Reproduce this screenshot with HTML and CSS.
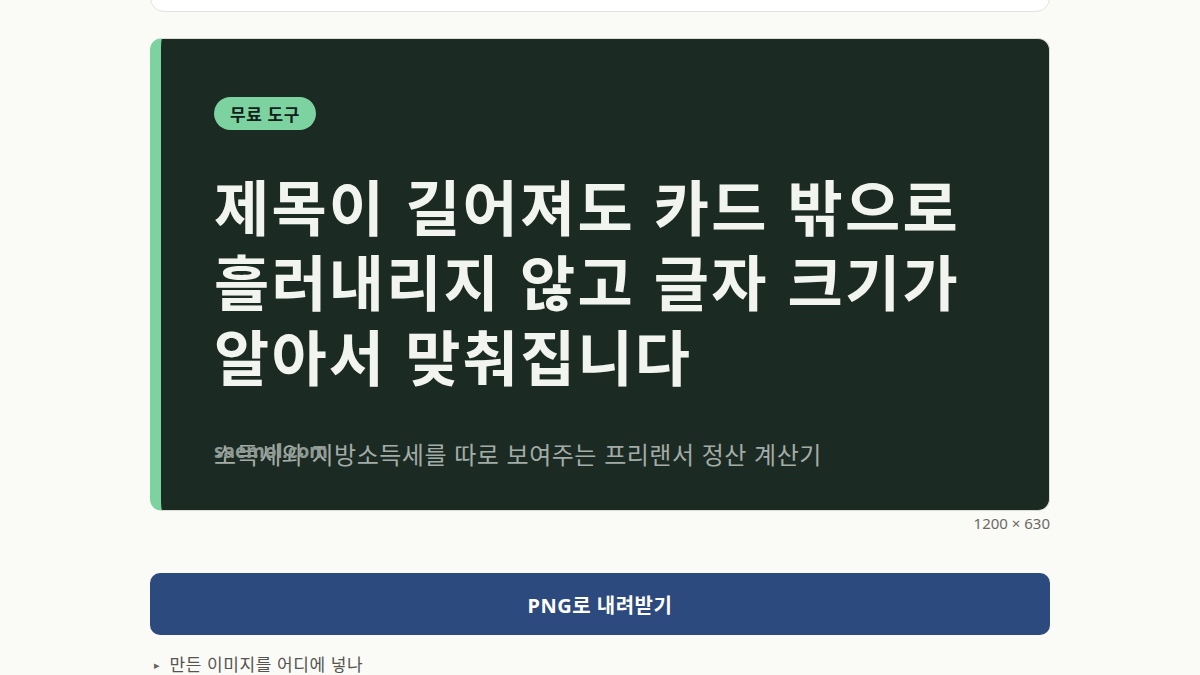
FILE: index.html
```html
<!DOCTYPE html>
<html lang="ko">
<head>
<meta charset="utf-8">
<link rel="stylesheet" href="styles.css">
</head>
<body>
<main class="page">
  <section class="top-card"></section>

  <figure class="preview">
    <div class="og-card">
      <span class="badge">무료 도구</span>
      <h1 class="og-title">제목이 길어져도 카드 밖으로 흘러내리지 않고 글자 크기가 알아서 맞춰집니다</h1>
      <p class="og-sub">소득세와 지방소득세를 따로 보여주는 프리랜서 정산 계산기</p>
      <span class="og-brand">saemol.com</span>
    </div>
    <figcaption class="size">1200 × 630</figcaption>
  </figure>

  <button class="download">PNG로 내려받기</button>

  <details class="help">
    <summary>만든 이미지를 어디에 넣나</summary>
  </details>
</main>
</body>
</html>
```

FILE: styles.css
```css
* { box-sizing: border-box; }
html, body {
  margin: 0;
  background: #fafaf6;
  font-family: "Noto Sans", "Noto Sans CJK KR", sans-serif;
  overflow: hidden;
}
.page {
  width: 900px;
  margin: 0 auto;
}
.top-card {
  height: 52px;
  margin-top: -40px;
  background: #ffffff;
  border: 1px solid #e3e3dc;
  border-radius: 14px;
}
.preview {
  margin: 26px 0 0;
}
.og-card {
  position: relative;
  height: 473px;
  background: #1c2a24;
  border: 1px solid #d9ddd6;
  border-left: 11px solid #7dd3a0;
  border-radius: 12px;
  padding: 58px 60px 0 53px;
  display: flex;
  flex-direction: column;
  align-items: flex-start;
}
.badge {
  display: inline-flex;
  align-items: center;
  height: 33px;
  padding: 0 16px;
  border-radius: 17px;
  background: #7dd3a0;
  color: #13201a;
  font-family: "Noto Sans CJK KR", sans-serif;
  font-weight: 700;
  font-size: 17px;
  letter-spacing: 0.5px;
}
.og-title {
  margin: 37px 0 0;
  max-width: 780px;
  color: #f1f4ef;
  font-family: "Noto Sans CJK KR", sans-serif;
  font-weight: 700;
  font-size: 60px;
  line-height: 75px;
  letter-spacing: 2.2px;
  word-break: keep-all;
}
.og-sub {
  margin: 46px 0 0;
  color: #a3aca6;
  font-family: "Noto Sans CJK KR", sans-serif;
  font-size: 24px;
  line-height: 32px;
  letter-spacing: 0.5px;
  word-break: keep-all;
}
.og-brand {
  position: absolute;
  left: 53px;
  top: 399px;
  color: #8e9a93;
  font-family: "Noto Sans", sans-serif;
  font-weight: 700;
  font-size: 19px;
}
.size {
  margin-top: 2px;
  text-align: right;
  color: #6b6b66;
  font-size: 15px;
  line-height: 20px;
}
.download {
  display: block;
  width: 100%;
  height: 62px;
  margin-top: 40px;
  border: none;
  border-radius: 10px;
  background: #2c4a7e;
  color: #ffffff;
  font-family: "Noto Sans", "Noto Sans CJK KR", sans-serif;
  font-weight: 700;
  font-size: 20px;
  letter-spacing: 0.5px;
}
.help {
  margin-top: 18px;
  color: #55554f;
  font-size: 17px;
  line-height: 24px;
  letter-spacing: 0.6px;
}
.help summary {
  list-style: none;
  cursor: pointer;
}
.help summary::before {
  content: "▸";
  font-size: 11px;
  margin-left: 4px;
  margin-right: 9px;
  color: #66665f;
  vertical-align: 2px;
}
```
